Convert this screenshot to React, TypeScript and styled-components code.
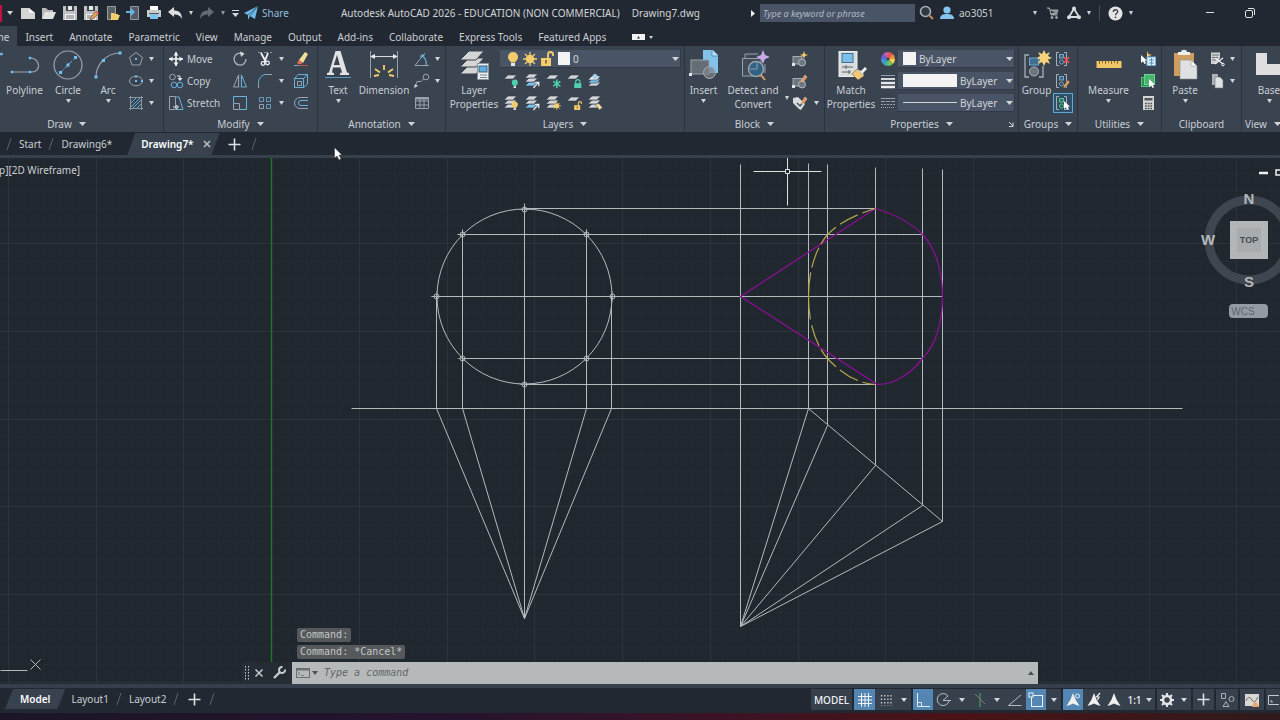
import React from "react";
import styled, { createGlobalStyle, css } from "styled-components";

const c = {
  bar: "#222831",
  panel: "#3a4350",
  panelEdge: "#2b323c",
  field: "#4a5467",
  canvas: "#20272e",
  text: "#c9ced4",
  bright: "#eef0f2",
  grey: "#d2d5d8",
  line: "#9aa3ad",
  blue: "#74bce6",
  yellow: "#f3cd6c",
  teal: "#4fd0ae",
  active: "#5486b4",
  wire: "#b4bbbd",
};

const Global = createGlobalStyle`
  *, *::before, *::after { box-sizing: border-box; }
  body { margin: 0; background: ${c.bar}; color: ${c.text}; font-family: "Noto Sans", "Open Sans", sans-serif; font-size: 10px; line-height: 14px; overflow: hidden; }
  button, input, select { font: inherit; color: inherit; background: none; border: 0; padding: 0; margin: 0; }
  button { display: inline-flex; align-items: center; justify-content: center; white-space: nowrap; flex: none; }
  svg { display: block; flex: none; }
`;

const Shell = styled.div`
  display: flex;
  flex-direction: column;
  height: 100vh;
  overflow: hidden;
`;

/* ---------- title bar ---------- */

const TitleBar = styled.header`
  display: flex;
  align-items: center;
  height: 26px;
  flex: none;
`;
const AppMark = styled.span`
  width: 2px;
  height: 17px;
  background: #c2123f;
`;
const ToolButton = styled.button<{ $w?: number }>`
  width: ${(p) => p.$w ?? 21}px;
  height: 22px;
`;
const ShareButton = styled.button`
  gap: 4px;
  padding-left: 2px;
  color: #8fbfdd;
  height: 22px;
`;
const DocTitle = styled.h1`
  flex: 1;
  display: flex;
  justify-content: center;
  gap: 12px;
  margin: 0;
  padding-left: 6px;
  font-size: 10px;
  font-weight: 400;
  white-space: nowrap;
  overflow: hidden;
  color: ${c.grey};
`;
const TitleRight = styled.div`
  display: flex;
  align-items: center;
  padding-right: 10px;
`;
const SearchBox = styled.input`
  width: 155px;
  height: 18px;
  padding: 0 3px;
  background: ${c.field};
  font-size: 9px;
  font-style: italic;
  &::placeholder { color: #b3b9c3; opacity: 1; }
`;
const UserButton = styled.button`
  gap: 4px;
  width: 98px;
  justify-content: flex-start;
  & > svg:last-child { margin-left: auto; }
`;
const Divider = styled.span`
  width: 1px;
  height: 16px;
  margin: 0 4px 0 5px;
  background: #454c56;
`;
const AccountTools = styled.div`
  display: flex;
  align-items: center;
  padding-left: 5px;
`;
const WindowButtons = styled.div`
  display: flex;
  margin-left: 54px;
`;

/* ---------- ribbon ---------- */

const TabStrip = styled.nav`
  display: flex;
  height: 20px;
  margin-left: -27px;
  flex: none;
`;
const RibbonTab = styled.button<{ $on?: boolean }>`
  padding: 2px 8px 0;
  height: 20px;
  background: ${(p) => (p.$on ? c.panel : "transparent")};
`;
const Ribbon = styled.section`
  display: flex;
  height: 86px;
  margin-left: -30px;
  flex: none;
  background: ${c.panel};
`;
const Panel = styled.div<{ $w: number; $last?: boolean }>`
  width: ${(p) => p.$w}px;
  flex: ${(p) => (p.$last ? "1 0 auto" : "none")};
  display: flex;
  flex-direction: column;
  border-right: 1px solid ${c.panelEdge};
`;
const PanelBody = styled.div<{ $pad?: number }>`
  display: flex;
  height: 69px;
  padding: 2px 0 0 ${(p) => p.$pad ?? 4}px;
`;
const PanelTitle = styled.div<{ $start?: boolean }>`
  position: relative;
  display: flex;
  align-items: center;
  justify-content: ${(p) => (p.$start ? "flex-start" : "center")};
  padding-left: ${(p) => (p.$start ? 3 : 0)}px;
  gap: 7px;
  height: 17px;
  padding-top: 1px;
`;
const Launcher = styled.button`
  position: absolute;
  right: 4px;
  top: 6px;
`;
const BigButton = styled.button<{ $w: number }>`
  width: ${(p) => p.$w}px;
  height: 67px;
  padding-top: 1px;
  flex-direction: column;
  justify-content: flex-start;
  & > span { line-height: 14px; white-space: pre; text-align: center; }
  & > svg:first-child { margin-bottom: 2px; }
  & > svg:last-child { margin-top: 2px; }
`;
const Column = styled.div<{ $w?: number; $end?: number }>`
  display: flex;
  flex-direction: column;
  flex: ${(p) => (p.$w ? "none" : "1")};
  width: ${(p) => (p.$w ? p.$w + "px" : "auto")};
  padding-right: ${(p) => p.$end ?? 0}px;
`;
const Row = styled.div`
  display: flex;
  align-items: center;
  height: 22px;
  flex: none;
`;
const Small = styled.button<{ $w?: number; $on?: boolean }>`
  width: ${(p) => p.$w ?? 21}px;
  height: 20px;
  ${(p) => p.$on && css`border: 1px solid #5aa9d8; background: #2f4f68;`}
`;
const SideCaret = styled.button`
  width: 5px;
  height: 67px;
  padding-top: 32px;
`;
const Labelled = styled.button`
  gap: 3px;
  height: 20px;
  justify-content: flex-start;
`;
const Field = styled.label<{ $gap?: number }>`
  flex: 1;
  display: flex;
  align-items: center;
  gap: ${(p) => p.$gap ?? 3}px;
  height: 18px;
  min-width: 0;
  padding: 0 1px 0 5px;
  background: ${c.field};
  border-right: 1px solid #313946;
  border-bottom: 1px solid #313946;
`;
const Pick = styled.select`
  appearance: none;
  flex: 1;
  min-width: 0;
  color: ${c.grey};
`;
const Swatch = styled.i<{ $w: number; $gap?: number }>`
  width: ${(p) => p.$w}px;
  height: 13px;
  margin: 0 ${(p) => p.$gap ?? 0}px;
  background: #f3f3f3;
  flex: none;
`;
const LineSample = styled.i`
  width: 54px;
  height: 1px;
  background: ${c.grey};
  flex: none;
`;

/* ---------- drawing tabs ---------- */

const FileTabs = styled.nav`
  display: flex;
  align-items: center;
  height: 26px;
  flex: none;
  padding: 1px 0 0 5px;
  border-bottom: 3px solid #36414b;
`;
const SlantTab = styled.button<{ $on?: boolean; $h: number; $pad: number; $end?: number; $lead?: number }>`
  height: ${(p) => p.$h}px;
  padding: 0 ${(p) => p.$end ?? p.$pad}px 0 ${(p) => p.$pad}px;
  margin-left: ${(p) => p.$lead ?? 0}px;
  gap: 9px;
  ${(p) =>
    p.$on &&
    css`
      background: #38424f;
      color: #ffffff;
      font-weight: 600;
      clip-path: polygon(8px 0, 100% 0, calc(100% - 8px) 100%, 0 100%);
    `}
`;

/* ---------- canvas ---------- */

const Canvas = styled.main`
  position: relative;
  flex: 1;
  min-height: 0;
  display: flex;
  flex-direction: column;
  justify-content: space-between;
  overflow: hidden;
  background: ${c.canvas};
`;
const Drawing = styled.svg`
  position: absolute;
  inset: 0;
  width: 100%;
  height: 100%;
`;
const ViewLabel = styled.div`
  position: relative;
  display: flex;
  height: 24px;
  align-items: center;
  margin-left: -25px;
`;
const ViewCube = styled.svg`
  position: absolute;
  top: 4px;
  right: -20px;
`;
const Pointer = styled.svg`
  position: absolute;
  left: 334px;
  top: 147px;
  z-index: 2;
`;
const CommandArea = styled.div`
  position: relative;
  width: 796px;
  max-width: 100%;
  margin: 0 auto;
`;
const History = styled.div`
  display: flex;
  flex-direction: column;
  align-items: flex-start;
  gap: 3px;
  padding: 0 0 3px 55px;
  font-family: "DejaVu Sans Mono", "Liberation Mono", monospace;
`;
const HistoryLine = styled.span`
  padding: 0 3px;
  background: #55595c;
  border-radius: 2px;
  color: #c4c6c7;
`;
const CommandBar = styled.div`
  display: flex;
  height: 22px;
  background: #252c34;
`;
const CommandField = styled.label`
  flex: 1;
  display: flex;
  align-items: center;
  gap: 2px;
  padding: 0 4px;
  background: #b6b9ba;
  color: #4c5052;
`;
const CommandInput = styled.input`
  flex: 1;
  padding-left: 4px;
  font-family: "DejaVu Sans Mono", "Liberation Mono", monospace;
  font-style: italic;
  &::placeholder { color: #626668; opacity: 1; }
`;

/* ---------- status bar ---------- */

const StatusBar = styled.footer`
  display: flex;
  justify-content: space-between;
  height: 29px;
  flex: none;
  border-top: 4px solid #36404c;
`;
const LayoutTabs = styled.nav`
  display: flex;
  align-items: center;
  height: 22px;
  padding-left: 5px;
`;
const StatusTools = styled.div`
  display: flex;
  gap: 2px;
  padding-top: 1px;
`;
const StatusGroup = styled.div`
  display: flex;
  height: 21px;
  background: #37414d;
  color: ${c.bright};
`;
const StatusButton = styled.button<{ $w: number; $on?: boolean }>`
  width: ${(p) => p.$w}px;
  height: 21px;
  gap: 4px;
  background: ${(p) => (p.$on ? c.active : "transparent")};
  font-weight: 500;
`;
const Desktop = styled.div`
  height: 7px;
  flex: none;
  background: linear-gradient(90deg, #1c1528 0%, #25132e 35%, #3b1326 55%, #4a1316 75%, #301a1c 100%);
`;

/* ---------- icons ---------- */

type IconProps = { w?: number; h?: number; box?: string; children: React.ReactNode };
const Icon = ({ w = 16, h = 16, box, children }: IconProps) => (
  <svg width={w} height={h} viewBox={box ?? `0 0 ${w} ${h}`} fill="none" stroke={c.line} strokeWidth="1" aria-hidden="true">
    {children}
  </svg>
);
const Caret = ({ size = 5, color = c.grey }: { size?: number; color?: string }) => (
  <svg width={size} height="4" viewBox="0 0 6 4" preserveAspectRatio="none" aria-hidden="true">
    <path d="M0 0H6L3 4Z" fill={color} />
  </svg>
);
const Plus = () => (
  <Icon w={13} h={13}><path d="M6.5 0.500V12.500M0.500 6.500H12.500" stroke="#dfe2e5" strokeWidth="1.600" /></Icon>
);
const Slash = () => (
  <Icon w={8} h={14}><path d="M6 1L2 13" stroke="#59616b" /></Icon>
);

const sheet = (y: number, fill: string = c.grey) => <path d={`M5 ${y}H13.500L10 ${y + 4}H1Z`} fill={fill} stroke="#303844" strokeWidth="0.600" />;

const PageIcon = () => <Icon><path d="M1 3H9L15 8V14H1Z" fill="#d4d4d2" stroke="none" /><path d="M9 3V8H15Z" fill="#f3f3f3" stroke="none" /></Icon>;
const OpenIcon = () => <Icon><path d="M1 14V3H5L7 5H12V7" fill="#b9b9b7" stroke="none" /><path d="M1 14L4 7H15L12 14Z" fill="#e2e2e0" stroke="none" /></Icon>;
const Floppy = () => (<g stroke="none"><path d="M1 1H15V15H1Z" fill="#bfc1c2" /><path d="M4 1H12V6H4Z" fill="#3c444e" /><path d="M6 1H10V5H6Z" fill="#e9e9e9" /><path d="M3 9H13V15H3Z" fill="#efefef" /><path d="M4 11H12M4 13H12" stroke="#777" /></g>);
const SaveIcon = () => <Icon><Floppy /></Icon>;
const SaveAsIcon = () => <Icon><Floppy /><path d="M7 15L8 12L13 6L16 8L10 14Z" fill="#e9a155" stroke="#2a3039" strokeWidth="0.500" /><path d="M13 6L16 8L15 9L12 7Z" fill="#e25a4a" stroke="none" /></Icon>;
const MobileOpenIcon = () => <Icon><path d="M3.500 1.500H11.500V14.500H3.500Z" fill="#59616b" stroke="#9c9c94" /><path d="M7 15V8H10L11 9H14V10H16L14 15Z" fill="#f0cf6a" stroke="none" /></Icon>;
const MobileSaveIcon = () => <Icon><path d="M5.500 1.500H13.500V14.500H5.500Z" fill="#515b66" stroke="#8e979f" /><path d="M1 6H6V3L10 7L6 11V8H1Z" fill="#63b5e4" stroke="none" /></Icon>;
const PrintIcon = () => <Icon><path d="M4 1H12V5H4Z" fill="#fff" stroke="none" /><path d="M1 5H15V12H1Z" fill="#c9cccd" stroke="none" /><path d="M4 9H12V14H4Z" fill="#7cc4ec" stroke="none" /><path d="M3 8.500H13" stroke="#555" /></Icon>;
const UndoIcon = ({ flip }: { flip?: boolean }) => (
  <Icon><g transform={flip ? "translate(16 0) scale(-1 1)" : undefined}><path d="M1 7L7 2V5.500C12 5.500 15 8 15 14C13 10.500 11 9.500 7 9.500V12Z" fill={flip ? "#636a72" : "#dcdedf"} stroke="none" /></g></Icon>
);
const PlaneIcon = () => <Icon w={14} h={14}><path d="M0 7L14 0L11 13L6 10L4 14L4 9Z" fill="#6fb9e6" stroke="none" /><path d="M4 9L14 0L6 10" stroke="#245272" strokeWidth="0.700" /></Icon>;
const SearchIcon = () => <Icon><circle cx="6.500" cy="6.500" r="5" stroke="#a9b0b7" strokeWidth="1.600" fill="#303842" /><path d="M10.500 10.500L14 14" stroke="#c58c5b" strokeWidth="2" /></Icon>;
const UserIcon = () => <Icon><circle cx="8" cy="5" r="3.600" fill="#84c4ec" stroke="none" /><path d="M1 14C1 10 4 9 8 9S15 10 15 14Z" fill="#84c4ec" stroke="none" /></Icon>;
const CartIcon = () => <Icon w={12} h={12}><path d="M0 1H2.500L4 8H10.500M3 3H11L10 6.500H4" stroke="#9fa4a9" fill="#868c92" /><circle cx="5" cy="10.500" r="1" fill="#a9aeb3" /><circle cx="9.500" cy="10.500" r="1" fill="#a9aeb3" /></Icon>;
const AppStoreIcon = () => <Icon w={14} h={14}><path d="M7 2.500L2 11H12Z" stroke="#dadcde" strokeWidth="1.800" /><circle cx="7" cy="2.500" r="2" fill="#dadcde" stroke="none" /><circle cx="2" cy="11.300" r="2" fill="#dadcde" stroke="none" /><circle cx="12" cy="11.300" r="2" fill="#dadcde" stroke="none" /></Icon>;
const HelpIcon = () => <Icon w={15} h={15}><circle cx="7.500" cy="7.500" r="7" fill="#e4e4e4" stroke="none" /><path d="M5.300 6C5.300 3 9.800 3 9.700 5.700C9.700 7.300 7.500 7.300 7.500 9.300" stroke="#3a414a" strokeWidth="1.400" /><circle cx="7.500" cy="11.300" r="0.900" fill="#3a414a" stroke="none" /></Icon>;

const Dot = ({ x, y, s = 2.4 }: { x: number; y: number; s?: number }) => <rect x={x - s / 2} y={y - s / 2} width={s} height={s} fill="#6fc3f2" stroke="none" />;
const LineIcon = () => <Icon w={30} h={32}><path d="M2 30L27 3" /><Dot x={27.500} y={3} /></Icon>;
const PolylineIcon = () => <Icon w={30} h={32}><path d="M2 23H22C31 23 31 9 20 9" strokeWidth="1.200" /><Dot x={2} y={23} /><Dot x={20} y={23} /><Dot x={20} y={9} /></Icon>;
const CircleIcon = () => <Icon w={30} h={32}><circle cx="15" cy="16" r="14" strokeWidth="1.200" /><path d="M7.500 23.500L22.500 8.500" stroke="#6fb9e6" strokeDasharray="4 2" /><Dot x={7.500} y={23.500} s={3} /><Dot x={15} y={16} s={3} /><Dot x={22.500} y={8.500} s={3} /></Icon>;
const ArcIcon = () => <Icon w={30} h={32}><path d="M3 28C3 16 13 4 27 4" strokeWidth="1.200" /><Dot x={3} y={28} s={3} /><Dot x={10.500} y={11.500} s={3} /><Dot x={27} y={4} s={3} /></Icon>;
const PolygonIcon = () => <Icon><path d="M8 1.500L14.500 6.500L12 14H4L1.500 6.500Z" /><Dot x={8} y={8} s={2} /></Icon>;
const EllipseIcon = () => <Icon><ellipse cx="8" cy="8" rx="6.500" ry="4.800" /><Dot x={8} y={8} s={2} /><Dot x={14} y={8} s={2} /><Dot x={8} y={3.500} s={2} /></Icon>;
const HatchIcon = () => <Icon><path d="M2.500 1V15M13.500 1V15M1 2.500H15M1 13.500H15" stroke="#8d97a1" /><path d="M3 8L8 3M3 12L12 3M5 13L13 5M9 13L13 9" stroke="#63a9d6" /></Icon>;

const MoveIcon = () => <Icon><path d="M8 1V15M1 8H15" stroke="#f0f2f3" strokeWidth="1.600" /><path d="M8 1L10.500 4.500H5.500ZM8 15L5.500 11.500H10.500ZM1 8L4.500 5.500V10.500ZM15 8L11.500 10.500V5.500Z" fill="#f0f2f3" stroke="none" /></Icon>;
const CopyIcon = () => <Icon><circle cx="4.500" cy="4" r="2.800" /><circle cx="6" cy="12" r="2.800" stroke="#68b2dc" /><circle cx="12" cy="12" r="2.800" stroke="#68b2dc" /><path d="M9 3H12V7" stroke="#e6e8ea" /><path d="M9.500 5H14.500L12 8Z" fill="#e6e8ea" stroke="none" /></Icon>;
const StretchIcon = () => <Icon><path d="M1.500 1.500H7.500V14.500H1.500Z" /><path d="M8 2H11L15 14.500H8" stroke="#68b2dc" /><path d="M5 12H10M8 10L10.500 12L8 14" stroke="#e6e8ea" /></Icon>;
const RotateIcon = () => <Icon><path d="M11.500 3.200A6 6 0 1 0 14 8" strokeWidth="1.300" stroke="#aab2ba" /><path d="M8 0.500L12.500 2.500L9 6Z" fill="#d8dbde" stroke="none" /></Icon>;
const MirrorIcon = () => <Icon><path d="M6.500 2V14H1.500Z" /><path d="M9.500 2V14H14.500Z" stroke="#68b2dc" /><path d="M8 1V15" stroke="#59626d" strokeDasharray="2 1" /></Icon>;
const ScaleIcon = () => <Icon><path d="M1.500 8V1.500H14.500V14.500H8" stroke="#68b2dc" /><path d="M1.500 8.500H7.500V14.500H1.500Z" /></Icon>;
const TrimIcon = () => <Icon><path d="M1 1.500H15" stroke="#8b949d" strokeDasharray="4 2" /><path d="M4 2L9 11M11 2L7.500 11" stroke="#eef0f2" strokeWidth="1.800" /><circle cx="6" cy="12.500" r="1.800" stroke="#eef0f2" strokeWidth="1.300" /><circle cx="10.500" cy="12" r="1.800" stroke="#eef0f2" strokeWidth="1.300" /></Icon>;
const FilletIcon = () => <Icon><path d="M1.500 15V10M9 1.500H15" /><path d="M1.500 10C1.500 5 5 1.500 9 1.500" stroke="#68b2dc" /></Icon>;
const ArrayIcon = () => <Icon><path d="M2.500 9.500H6.500V13.500H2.500Z" /><path d="M9.500 9.500H13.500V13.500H9.500ZM2.500 2.500H6.500V6.500H2.500ZM9.500 2.500H13.500V6.500H9.500Z" stroke="#6a9cbb" /></Icon>;
const EraseIcon = () => <Icon><path d="M6 9L12 1L15 3L10 12Z" fill="#f5dd98" stroke="none" /><path d="M6 9L10 12L6 13.500L4 12Z" fill="#e46d5e" stroke="none" /><path d="M1 14.500H5" stroke="#68b2dc" /><path d="M5 14.500H15" stroke="#e2584c" strokeWidth="0.800" /></Icon>;
const ExplodeIcon = () => <Icon><path d="M1.500 5.500H10.500V14.500H1.500ZM1.500 5.500L5 1.500H14.500L10.500 5.500M14.500 1.500V11L10.500 14.500" stroke="#68b2dc" /><path d="M4.500 8.500H8.500V12.500H4.500Z" /></Icon>;
const OffsetIcon = () => <Icon><path d="M15 2.500H7A5.500 5.500 0 0 0 7 13.500H15" /><path d="M15 5.500H8A2.500 2.500 0 0 0 8 10.500H15" stroke="#68b2dc" /></Icon>;

const TextIcon = () => <Icon w={30} h={32}><path d="M4 26V24L6 23.500L12.500 2H17.500L24 23.500L26 24V26H17V24L19 23.500L17.500 18.500H10L9 23.500L11 24V26ZM10.800 16H16.800L14 6Z" fill="#e0e2e4" stroke="none" fillRule="evenodd" /><path d="M2 28.500H28" stroke="#5599c4" /></Icon>;
const DimensionIcon = () => <Icon w={30} h={32}><path d="M1.500 2V29M28.500 2V29" /><path d="M3 7.500H27" stroke="#d8dbde" /><path d="M1 7.500L6 5V10ZM29 7.500L24 5V10Z" fill="#e5e7e9" stroke="none" /><path d="M5 27L10 26M6 20L11 23.500M15 16V21M24 20L19 23.500M25 27L20 26" stroke={c.yellow} strokeWidth="1.800" /></Icon>;
const AngleDimIcon = () => <Icon><path d="M1 14.500H15M1 14.500L11 2" /><path d="M8 5C12 7 12.500 11 12 14M6.500 6L8 4L10.500 5" stroke="#68b2dc" strokeWidth="1.300" /></Icon>;
const LeaderIcon = () => <Icon><path d="M1 14L3 8.500H7L9.500 6" /><circle cx="12" cy="4" r="2.800" /><path d="M0 15L1 11L4 13Z" fill={c.grey} stroke="none" /></Icon>;
const TableIcon = () => <Icon><path d="M1.500 2.500H14.500V13.500H1.500ZM1.500 6H14.500M1.500 10H14.500M6 4V13.500M10 4V13.500" /><path d="M1.500 3.500H14.500" strokeWidth="2" /></Icon>;

const LayerPropIcon = () => (
  <Icon w={32} h={32}>
    {[16, 9, 2].map((y) => <path key={y} d={`M11 ${y}H26L18 ${y + 9}H2Z`} fill="#d4d6d6" stroke="#3a4350" />)}
    <rect x="19.500" y="14.500" width="11" height="16" fill="#eceeef" stroke="#8c949b" /><rect x="21" y="17" width="8" height="6" fill="#5fade0" stroke="#3d617c" /><path d="M22 26H29M22 28.500H29" stroke="#7a828a" />
  </Icon>
);
const Bulb = ({ color = c.yellow }: { color?: string }) => <g stroke="none"><circle cx="8" cy="6" r="5" fill={color} /><path d="M5.500 10H10.500V11.500H5.500Z" fill={color} /><path d="M6 12H10V15H6Z" fill="#e6e6e6" /></g>;
const BulbIcon = () => <Icon><Bulb /></Icon>;
const Sun = () => <g><circle cx="8" cy="8" r="4.200" fill={c.yellow} stroke="none" /><path d="M8 1V15M1 8H15M3 3L13 13M13 3L3 13" stroke={c.yellow} strokeWidth="1.300" /></g>;
const SunIcon = () => <Icon><Sun /></Icon>;
const Lock = ({ color = c.yellow }: { color?: string }) => <g><rect x="2" y="7" width="10" height="8" fill={color} stroke="none" /><path d="M9 7V3.500A2.500 2.500 0 0 1 14 3.500V5" stroke={color} strokeWidth="1.800" /><path d="M7 9V12.500" stroke="#6a5a2c" strokeWidth="1.500" /></g>;
const LockIcon = () => <Icon><Lock /></Icon>;
const ClosedLock = () => <g><rect x="2" y="7" width="12" height="8" fill={c.teal} stroke="none" /><path d="M4.500 7V4.500A3 3 0 0 1 11.500 4.500V7" stroke={c.teal} strokeWidth="2" /></g>;
const Badge = ({ children }: { children: React.ReactNode }) => <g transform="translate(7 6) scale(0.600)">{children}</g>;
const OneSheet = ({ children }: { children?: React.ReactNode }) => <Icon>{sheet(2)}<Badge>{children}</Badge></Icon>;
const Stack = ({ top = c.grey, mid = c.grey, low = c.grey, children }: { top?: string; mid?: string; low?: string; children?: React.ReactNode }) => (
  <Icon>{sheet(9, low)}{sheet(5, mid)}{sheet(1, top)}<Badge>{children}</Badge></Icon>
);
const Arrow = () => <path d="M4 15L12 6M7 5.500H13V12" stroke="#f0f2f4" strokeWidth="2" />;
const Snow = () => <path d="M8 1V15M2 4L14 12M14 4L2 12" stroke={c.teal} strokeWidth="2.600" />;
const CurrentIcon = () => <Icon>{sheet(9)}{sheet(6, "#7cc0ea")}{sheet(3, "#e4eff6")}<circle cx="8" cy="3.500" r="2.500" fill="#a9cfe6" stroke="none" /></Icon>;

const InsertIcon = () => <Icon w={30} h={32}><path d="M14 1H24L29 6V24H14Z" fill="#82c3ec" stroke="none" /><path d="M23 1V7H29" fill="#bfe2f6" stroke="#4f94bf" /><rect x="2" y="11" width="18" height="14" fill="#646c75" stroke="#9aa1a9" /><circle cx="20.500" cy="23.500" r="6" fill="#7b828a" fillOpacity="0.700" stroke="#a9afb5" /><path d="M0 24H3V27H0Z" fill="#dceaf2" stroke="none" /></Icon>;
const DetectIcon = () => <Icon w={32} h={32}><path d="M8 9V5H21M28 15V24M5.500 9.500H24V27H5.500Z" fill="#424b58" /><circle cx="19" cy="20" r="7.500" fill="#2f6285" stroke="#97a3ad" strokeWidth="1.500" /><path d="M13 20H20V13" stroke="#8fa0ad" /><path d="M24 26L28 31" stroke="#dba05e" strokeWidth="2" /><path d="M26 1L28 6L33 8L28 10L26 15L24 10L19 8L24 6Z" fill="#c9a8ec" stroke="none" /></Icon>;
const Blk = ({ children }: { children?: React.ReactNode }) => <Icon><rect x="1" y="5.500" width="9" height="7.500" fill="#6d757e" stroke="#a4abb2" /><circle cx="10" cy="11.500" r="3.500" fill="#6d757e" stroke="#b4babf" /><path d="M0 12H3V15H0Z" fill="#e2e4e6" stroke="none" />{children}</Icon>;
const Pen = () => <path d="M9 8L13 2L15 4L11 9Z" fill="#e98d5c" stroke="#f0d292" strokeWidth="0.600" />;
const TagIcon = () => <Icon><path d="M1 3L6 2L13 9L9 15L7 14L1 8Z" fill="#d9dbdc" stroke="none" /><path d="M5 8L8 11L13 5" stroke="#4a525d" strokeWidth="1.500" /><Pen /></Icon>;

const MatchIcon = () => <Icon w={32} h={32}><rect x="4" y="2.500" width="18" height="25" fill="#dbdddd" stroke="#eee" /><rect x="7" y="4.500" width="11" height="9" fill="#7cc0ea" stroke="#3f7396" /><path d="M7 18H18M7 23H16M11 16V20M14 21V25" stroke="#5c646c" /><path d="M17 25L22 20L29 27L23 31Z" fill="#f0c878" stroke="#6f5b35" strokeWidth="0.600" /><path d="M22 20L26 22L30 18L32 20L28 24L29 27Z" fill="#f0f0f0" stroke="none" /></Icon>;
const WheelIcon = () => {
  const hues = ["#e8554d", "#f08f3d", "#f3d14e", "#6fc05a", "#43b59a", "#4a90d9", "#6c62cf", "#c95bb5"];
  return (
    <Icon>
      {hues.map((h, i) => {
        const a = (i * Math.PI) / 4 - Math.PI / 2;
        const b = a + Math.PI / 4;
        return <path key={h} d={`M8 8L${8 + 7 * Math.cos(a)} ${8 + 7 * Math.sin(a)}A7 7 0 0 1 ${8 + 7 * Math.cos(b)} ${8 + 7 * Math.sin(b)}Z`} fill={h} stroke="none" />;
      })}
      <circle cx="8" cy="8" r="1.600" fill={c.panel} stroke="none" />
    </Icon>
  );
};
const WeightIcon = () => <Icon><path d="M1 2.500H15" /><path d="M1 6H15" strokeWidth="2" stroke="#d5d8da" /><path d="M1 10H15" strokeWidth="2.500" stroke="#e5e7e8" /><path d="M1 14H15" strokeWidth="2.500" stroke="#eee" /></Icon>;
const TypeIcon = () => <Icon><path d="M1 3.500H15" /><path d="M1 6.500H15" strokeDasharray="4 1" /><path d="M1 9.500H15" strokeDasharray="2 1" /><path d="M1 12.500H15" strokeDasharray="1 1" /></Icon>;

const Brackets = ({ tone = "#6ea8cf" }: { tone?: string }) => <g><path d="M4 1.500H1.500V14.500H4M9 1.500H11.500V14.500H9" stroke="#a7afb7" /><rect x="4.500" y="3.500" width="4" height="3.500" stroke={tone} fill="#3e6684" /><circle cx="6.500" cy="11" r="2" stroke={tone} /></g>;
const Cursor = ({ x, y }: { x: number; y: number }) => <path transform={`translate(${x} ${y})`} d="M0 0V8L2 6.300L3.500 9L5 8.200L3.700 5.700H6Z" fill="#fff" stroke="none" />;
const GroupIcon = () => <Icon w={32} h={32}><path d="M8 6H4V28H8M18 28H22V17" stroke="#a7afb7" strokeWidth="1.300" /><rect x="8.500" y="9" width="9" height="7" fill="#3f6e91" stroke="#6ea8cf" /><circle cx="13" cy="22.500" r="4.500" fill="#6d757e" stroke="#a7afb7" /><g transform="translate(16 1)"><path d="M7 0L9 4L13 2L11 6L15 8L11 9.500L13 14L9 12L7 16L5 12L1 14L3 9.500L0 8L3 6L1 2L5 4Z" fill="#f6d27c" stroke="none" /></g></Icon>;
const UngroupIcon = () => <Icon><Brackets /><path d="M9 6L14 12M14 6L9 12" stroke="#e0504e" strokeWidth="1.700" /></Icon>;
const GroupEditIcon = () => <Icon><Brackets /><path d="M8 15L9 12L13 7L15 9L11 14Z" fill="#e9a155" stroke="#3a4350" strokeWidth="0.500" /></Icon>;
const GroupSelectIcon = () => <Icon><Brackets tone="#58c774" /><Cursor x={9} y={6} /></Icon>;
const RulerIcon = () => <Icon w={30} h={32}><rect x="2.500" y="12" width="25" height="7" fill="#f0c667" stroke="none" /><path d="M5.500 12V15M8.500 12V14M11.500 12V15M14.500 12V14M17.500 12V15M20.500 12V14M23.500 12V15" stroke="#8c6d2a" /></Icon>;
const QuickSelectIcon = () => <Icon><path d="M7 0L8.500 3L12 4L8.500 5L7 8" fill={c.yellow} stroke="none" /><rect x="7" y="6" width="8.500" height="8.500" fill="#e4f0f8" stroke="#6fb2dc" /><path d="M9 9H14M9 12H14M11.500 7V14" stroke="#5793bb" /><Cursor x={1} y={4} /></Icon>;
const SelectAllIcon = () => <Icon><rect x="1.500" y="4.500" width="9" height="9" fill="#2f8e51" stroke="#54c67c" /><rect x="4.500" y="1.500" width="10" height="10" fill="#49b46d" stroke="#6bd891" /><Cursor x={9} y={6} /></Icon>;
const CalcIcon = () => <Icon><rect x="3" y="1" width="11" height="14" fill="#d6d5d0" stroke="none" /><rect x="4.500" y="3" width="8" height="2.500" fill="#4d545c" stroke="none" /><path d="M5 8.500H12M5 11H12M5 13.500H12" stroke="#4d545c" strokeWidth="1.400" strokeDasharray="1.800 0.900" /></Icon>;
const PasteIcon = () => <Icon w={30} h={32}><rect x="4" y="4" width="20" height="23" fill="#cf9d5d" stroke="none" /><path d="M8 6V3H11C11 0 17 0 17 3H20V6Z" fill="#eeeeee" stroke="none" /><path d="M10 11H21L27 17V30H10Z" fill="#dfe0e1" stroke="#8e9499" strokeWidth="0.600" /><path d="M21 11V17H27Z" fill="#ffffff" stroke="#8e9499" strokeWidth="0.600" /></Icon>;
const CutIcon = () => <Icon><path d="M2 1.500H11V7L7 13H2Z" fill="#cfd1d3" stroke="none" /><path d="M3 4H10M3 6.500H9M3 9H7" stroke="#6a7179" /><path d="M6 7L14 13M14 7L6 13" stroke="#eceeef" strokeWidth="1.300" /><circle cx="14" cy="13.500" r="1.300" stroke="#eceeef" /></Icon>;
const CopyClipIcon = () => <Icon><path d="M3 1H9V12H3Z" fill="#aeb2b5" stroke="none" /><path d="M6 4H11L14 7V15H6Z" fill="#dfe0e1" stroke="#6a7179" strokeWidth="0.600" /></Icon>;
const BaseIcon = () => <Icon w={32} h={32}><path d="M3 4H14V15H32V26H3Z" fill="#dfdfdf" stroke="none" /></Icon>;

const Person = ({ children }: { children?: React.ReactNode }) => <Icon><path d="M8 1L10.500 7.500L14.500 14L10 12.500L8 11.500L6 12.500L1.500 14L5.500 7.500Z" fill="#f0f0ee" stroke="none" />{children}</Icon>;

/* ---------- model-space drawing ---------- */

const GRID = 87.75;
const steps = (from: number, to: number) => Array.from({ length: to - from }, (_, i) => from + i);
const nodes = [[524, 209], [586, 234], [612, 296], [586, 358], [524, 384], [462, 358], [436, 296], [462, 234]];

const ModelSpace = () => (
  <Drawing aria-label="Cone projection drawing">
    <g fill="none" strokeWidth="1" transform="translate(0.500 -157.500)">
      <g stroke="#232b32">
        {steps(-16, 150).map((i) => <path key={"v" + i} d={`M${Math.round(271 + (i * GRID) / 5)} 150V2000`} />)}
        {steps(-6, 90).map((i) => <path key={"h" + i} d={`M0 ${Math.round(243 + (i * GRID) / 5)}H3000`} />)}
      </g>
      <g stroke="#2b343b">
        {steps(-3, 30).map((i) => <path key={"V" + i} d={`M${Math.round(271 + i * GRID)} 150V2000`} />)}
        {steps(0, 18).map((i) => <path key={"H" + i} d={`M0 ${Math.round(243 + i * GRID)}H3000`} />)}
      </g>
      <path d="M271 150V2000" stroke="#1f7426" strokeWidth="1.500" />
      <g stroke={c.wire}>
        <path d="M351 408H1182" />
        <circle cx="524" cy="296" r="87.500" />
        <path d="M524 203V618M462 229V408M586 229V408M436 296V408M611 296V408" />
        <path d="M524 208H875M457 234H922M431 296H942M462 358H922M524 384H875" />
        <path d="M436 408L524 618L462 408M586 408L524 618L611 408" />
        <path d="M740 164V626M808 163V408M827 164V425M875 167V465M922 168V505M942 169V521" />
        <path d="M808 408L942 521L740 626L808 408M827 425L740 626L875 465M922 505L740 626" />
        {nodes.map(([x, y]) => <g key={`${x}-${y}`}><circle cx={x} cy={y} r="2.500" /><path d={`M${x - 5} ${y}H${x + 5}M${x} ${y - 5}V${y + 5}`} strokeOpacity="0.600" /></g>)}
        <path d="M753 171H785M789 171H821M787 150V169M787 173V205M785 169H789V173H785Z" stroke="#dfe2e3" />
        <path d="M0 670H27M30 659L40 669M40 659L30 669" />
      </g>
      <path d="M875 208C895 214 912 224 922 234C937 250 942 275 942 296C942 320 936 344 922 358C911 372 895 384 877 384L740 296L875 208" stroke="#8a0f93" strokeWidth="1.300" />
      <path d="M875 208C858 213 840 221 827 234C814 250 808 272 808 296C808 320 814 343 827 358C840 372 856 383 875 384" stroke="#b5a648" strokeWidth="1.200" strokeDasharray="14 5 20 5 23 4 21 5 47 6 22 4 23 5 21 5 14 5" />
    </g>
  </Drawing>
);

const Cube = () => (
  <ViewCube width="102" height="160" fontFamily="Liberation Sans, sans-serif" fontWeight="700" textAnchor="middle">
    <circle cx="51" cy="78" r="40" fill="none" stroke="#40464f" strokeWidth="9" />
    <g fill="#b4b8bc" fontSize="15">
      <text x="51" y="42">N</text>
      <text x="10" y="83">W</text>
      <text x="51" y="125">S</text>
    </g>
    <rect x="32" y="59" width="38" height="38" fill="#b3b6b9" />
    <rect x="39" y="66" width="24" height="24" fill="#a8acaf" />
    <text x="51" y="81" fontSize="9" fill="#454b52">TOP</text>
    <rect x="31" y="142" width="39" height="14" rx="4" fill="#949aa3" />
    <text x="45" y="153" fontSize="10" fill="#5e656e" fontWeight="400">WCS</text>
    <path d="M61 11H70" stroke="#f0f0f0" strokeWidth="2.500" />
    <path d="M78 8H84V13H78Z" fill="none" stroke="#f0f0f0" strokeWidth="1.500" />
  </ViewCube>
);

const CaretCell = ({ w = 16, size = 5, name = "More options" }: { w?: number; size?: number; name?: string }) => (
  <Small $w={w} aria-label={name}><Caret size={size} /></Small>
);
const Tool = ({ name, icon, w, on }: { name: string; icon: React.ReactNode; w?: number; on?: boolean }) => (
  <Small $w={w} $on={on} aria-label={name}>{icon}</Small>
);

const ribbonTabs = ["Home", "Insert", "Annotate", "Parametric", "View", "Manage", "Output", "Add-ins", "Collaborate", "Express Tools", "Featured Apps"];

export default function App() {
  return (
    <Shell>
      <Global />
      <TitleBar>
        <AppMark />
        <ToolButton $w={15} aria-label="Application menu"><Caret size={6} /></ToolButton>
        <ToolButton aria-label="New"><PageIcon /></ToolButton>
        <ToolButton aria-label="Open"><OpenIcon /></ToolButton>
        <ToolButton aria-label="Save"><SaveIcon /></ToolButton>
        <ToolButton aria-label="Save as"><SaveAsIcon /></ToolButton>
        <ToolButton aria-label="Open from mobile"><MobileOpenIcon /></ToolButton>
        <ToolButton aria-label="Save to mobile"><MobileSaveIcon /></ToolButton>
        <ToolButton aria-label="Plot"><PrintIcon /></ToolButton>
        <ToolButton aria-label="Undo"><UndoIcon /></ToolButton>
        <ToolButton $w={11} aria-label="Undo list"><Caret size={4} /></ToolButton>
        <ToolButton aria-label="Redo"><UndoIcon flip /></ToolButton>
        <ToolButton $w={11} aria-label="Redo list"><Caret size={4} color="#9299a1" /></ToolButton>
        <ToolButton $w={14} aria-label="Customize toolbar">
          <Icon w={7} h={8}><path d="M0 1.500H7" stroke={c.grey} /><path d="M0 4H7L3.500 8Z" fill={c.grey} stroke="none" /></Icon>
        </ToolButton>
        <ShareButton><PlaneIcon />Share</ShareButton>
        <DocTitle><span>Autodesk AutoCAD 2026 - EDUCATION (NON COMMERCIAL)</span><span>Drawing7.dwg</span></DocTitle>
        <TitleRight>
          <ToolButton $w={14} aria-label="Collapse search"><Icon w={4} h={7}><path d="M0 0L4 3.500L0 7Z" fill={c.bright} stroke="none" /></Icon></ToolButton>
          <SearchBox aria-label="Search" placeholder="Type a keyword or phrase" />
          <ToolButton $w={24} aria-label="Run search"><SearchIcon /></ToolButton>
          <UserButton><UserIcon />ao3051<Caret size={4} /></UserButton>
          <AccountTools>
            <ToolButton aria-label="Cart"><CartIcon /></ToolButton>
            <ToolButton aria-label="App store"><AppStoreIcon /></ToolButton>
            <ToolButton $w={10} aria-label="App store menu"><Caret size={4} /></ToolButton>
            <Divider />
            <ToolButton $w={22} aria-label="Help"><HelpIcon /></ToolButton>
            <ToolButton $w={10} aria-label="Help menu"><Caret size={4} /></ToolButton>
          </AccountTools>
          <WindowButtons>
            <ToolButton $w={40} aria-label="Minimize"><Icon w={10} h={10}><path d="M1 4.500H9" stroke="#dfe1e3" /></Icon></ToolButton>
            <ToolButton $w={40} aria-label="Restore"><Icon w={10} h={10}><rect x="0.500" y="2.500" width="7" height="7" rx="1.500" stroke="#dfe1e3" /><path d="M3 0.500H8Q9.500 0.500 9.500 2V7" stroke="#dfe1e3" /></Icon></ToolButton>
          </WindowButtons>
        </TitleRight>
      </TitleBar>

      <TabStrip aria-label="Ribbon tabs">
        {ribbonTabs.map((t) => <RibbonTab key={t} $on={t === "Home"}>{t}</RibbonTab>)}
        <ToolButton $w={58} aria-label="Ribbon display">
          <Icon w={22} h={8}><rect x="0" y="1" width="13" height="6" fill="#f2f2f2" stroke="none" /><path d="M5 5.500L6.500 3L8 5.500Z" fill="#333" stroke="none" /><path d="M17 3H21L19 6Z" fill={c.grey} stroke="none" /></Icon>
        </ToolButton>
      </TabStrip>

      <Ribbon aria-label="Ribbon">
        <Panel $w={194}>
          <PanelBody $pad={4}>
            <BigButton $w={29} aria-label="Line"><LineIcon /></BigButton>
            <BigButton $w={43}><PolylineIcon /><span>Polyline</span></BigButton>
            <BigButton $w={44}><CircleIcon /><span>Circle</span><Caret /></BigButton>
            <BigButton $w={36}><ArcIcon /><span>Arc</span><Caret /></BigButton>
            <Column $w={38}>
              <Row><Tool w={19} name="Polygon" icon={<PolygonIcon />} /><CaretCell w={13} /></Row>
              <Row><Tool w={19} name="Ellipse" icon={<EllipseIcon />} /><CaretCell w={13} /></Row>
              <Row><Tool w={19} name="Hatch" icon={<HatchIcon />} /><CaretCell w={13} /></Row>
            </Column>
          </PanelBody>
          <PanelTitle>Draw<Caret size={7} /></PanelTitle>
        </Panel>

        <Panel $w={154}>
          <PanelBody>
            <Column $w={61}>
              <Row><Labelled><MoveIcon />Move</Labelled></Row>
              <Row><Labelled><CopyIcon />Copy</Labelled></Row>
              <Row><Labelled><StretchIcon />Stretch</Labelled></Row>
            </Column>
            <Column>
              <Row><Tool name="Rotate" icon={<RotateIcon />} /><Tool w={29} name="Trim" icon={<TrimIcon />} /><CaretCell w={5} /><Tool w={33} name="Erase" icon={<EraseIcon />} /></Row>
              <Row><Tool name="Mirror" icon={<MirrorIcon />} /><Tool w={29} name="Fillet" icon={<FilletIcon />} /><CaretCell w={5} /><Tool w={33} name="Explode" icon={<ExplodeIcon />} /></Row>
              <Row><Tool name="Scale" icon={<ScaleIcon />} /><Tool w={29} name="Array" icon={<ArrayIcon />} /><CaretCell w={5} /><Tool w={33} name="Offset" icon={<OffsetIcon />} /></Row>
            </Column>
          </PanelBody>
          <PanelTitle>Modify<Caret size={7} /></PanelTitle>
        </Panel>

        <Panel $w={128}>
          <PanelBody>
            <BigButton $w={32}><TextIcon /><span>Text</span><Caret /></BigButton>
            <BigButton $w={60}><DimensionIcon /><span>Dimension</span></BigButton>
            <Column>
              <Row><Tool w={16} name="Angular" icon={<AngleDimIcon />} /><CaretCell w={14} /></Row>
              <Row><Tool w={16} name="Leader" icon={<LeaderIcon />} /><CaretCell w={14} /></Row>
              <Row><Tool w={16} name="Table" icon={<TableIcon />} /></Row>
            </Column>
          </PanelBody>
          <PanelTitle>Annotation<Caret size={7} /></PanelTitle>
        </Panel>

        <Panel $w={239}>
          <PanelBody $pad={2}>
            <BigButton $w={52}><LayerPropIcon /><span>{"Layer\nProperties"}</span></BigButton>
            <Column $end={3}>
              <Row>
                <Field $gap={1}>
                  <BulbIcon /><SunIcon /><LockIcon /><Swatch $w={12} $gap={2} />
                  <Pick aria-label="Layer"><option>0</option></Pick>
                  <Caret size={7} />
                </Field>
              </Row>
              <Row>
                <Tool name="Layer off" icon={<OneSheet><Bulb color={c.teal} /></OneSheet>} />
                <Tool name="Isolate" icon={<Stack low="#7cc0ea"><Arrow /></Stack>} />
                <Tool name="Freeze" icon={<OneSheet><Snow /></OneSheet>} />
                <Tool name="Lock" icon={<OneSheet><ClosedLock /></OneSheet>} />
                <Tool name="Make current" icon={<CurrentIcon />} />
              </Row>
              <Row>
                <Tool name="All layers on" icon={<Stack><Bulb /></Stack>} />
                <Tool name="Unisolate" icon={<Stack low="#7cc0ea"><Arrow /></Stack>} />
                <Tool name="Thaw all" icon={<Stack><Sun /></Stack>} />
                <Tool name="Unlock" icon={<OneSheet><Lock /></OneSheet>} />
                <Tool name="Match layer" icon={<Stack><path d="M2 6L8 4L14 11L9 15Z" fill="#f0d9a0" stroke="#555" /></Stack>} />
              </Row>
            </Column>
          </PanelBody>
          <PanelTitle>Layers<Caret size={7} /></PanelTitle>
        </Panel>

        <Panel $w={140}>
          <PanelBody $pad={0}>
            <BigButton $w={37}><InsertIcon /><span>Insert</span><Caret /></BigButton>
            <BigButton $w={62}><DetectIcon /><span>{"Detect and\nConvert"}</span></BigButton>
            <SideCaret aria-label="Detect options"><Caret size={4} /></SideCaret>
            <Column>
              <Row><Tool w={22} name="Create block" icon={<Blk><path d="M12 0L13 3L16 4L13 5L12 8L11 5L8 4L11 3Z" fill={c.yellow} stroke="none" /></Blk>} /></Row>
              <Row><Tool w={22} name="Edit block" icon={<Blk><Pen /></Blk>} /></Row>
              <Row><Tool w={22} name="Edit attributes" icon={<TagIcon />} /><CaretCell w={10} /></Row>
            </Column>
          </PanelBody>
          <PanelTitle>Block<Caret size={7} /></PanelTitle>
        </Panel>

        <Panel $w={194}>
          <PanelBody $pad={0}>
            <BigButton $w={52}><MatchIcon /><span>{"Match\nProperties"}</span></BigButton>
            <Column $end={3}>
              <Row><Tool w={21} name="Color" icon={<WheelIcon />} /><Field><Swatch $w={13} /><Pick aria-label="Object color"><option>ByLayer</option></Pick><Caret size={7} /></Field></Row>
              <Row><Tool w={21} name="Lineweight" icon={<WeightIcon />} /><Field><Swatch $w={54} /><Pick aria-label="Lineweight"><option>ByLayer</option></Pick><Caret size={7} /></Field></Row>
              <Row><Tool w={21} name="Linetype" icon={<TypeIcon />} /><Field><LineSample /><Pick aria-label="Linetype"><option>ByLayer</option></Pick><Caret size={7} /></Field></Row>
            </Column>
          </PanelBody>
          <PanelTitle>Properties<Caret size={7} /><Launcher aria-label="Properties palette"><Icon w={6} h={6}><path d="M1 1L5 5M5 1.500V5.500H1" stroke={c.grey} /></Icon></Launcher></PanelTitle>
        </Panel>

        <Panel $w={59}>
          <PanelBody $pad={1}>
            <BigButton $w={33}><GroupIcon /><span>Group</span></BigButton>
            <Column>
              <Row><Tool w={20} name="Ungroup" icon={<UngroupIcon />} /></Row>
              <Row><Tool w={20} name="Group edit" icon={<GroupEditIcon />} /></Row>
              <Row><Tool w={20} on name="Group selection" icon={<GroupSelectIcon />} /></Row>
            </Column>
          </PanelBody>
          <PanelTitle>Groups<Caret size={7} /></PanelTitle>
        </Panel>

        <Panel $w={84}>
          <PanelBody>
            <BigButton $w={53}><RulerIcon /><span>Measure</span><Caret /></BigButton>
            <Column>
              <Row><Tool w={26} name="Quick select" icon={<QuickSelectIcon />} /></Row>
              <Row><Tool w={26} name="Select all" icon={<SelectAllIcon />} /></Row>
              <Row><Tool w={26} name="Calculator" icon={<CalcIcon />} /></Row>
            </Column>
          </PanelBody>
          <PanelTitle>Utilities<Caret size={7} /></PanelTitle>
        </Panel>

        <Panel $w={80}>
          <PanelBody $pad={3}>
            <BigButton $w={40}><PasteIcon /><span>Paste</span><Caret /></BigButton>
            <Column>
              <Row><Tool w={24} name="Cut" icon={<CutIcon />} /><CaretCell w={6} /></Row>
              <Row><Tool w={24} name="Copy clip" icon={<CopyClipIcon />} /><CaretCell w={6} /></Row>
            </Column>
          </PanelBody>
          <PanelTitle>Clipboard</PanelTitle>
        </Panel>

        <Panel $w={56} $last>
          <PanelBody $pad={11}><BigButton $w={32}><BaseIcon /><span>Base</span><Caret /></BigButton></PanelBody>
          <PanelTitle $start>View<Caret size={7} /></PanelTitle>
        </Panel>
      </Ribbon>

      <FileTabs aria-label="Open drawings">
        <Slash />
        <SlantTab $h={22} $pad={6}>Start</SlantTab>
        <Slash />
        <SlantTab $h={22} $pad={6}>Drawing6*</SlantTab>
        <SlantTab $h={22} $pad={14} $end={9} $lead={9} $on>
          Drawing7*
          <Icon w={8} h={8}><path d="M1 1L7 7M7 1L1 7" stroke="#b9bec4" strokeWidth="1.500" /></Icon>
        </SlantTab>
        <ToolButton $w={30} aria-label="New tab"><Plus /></ToolButton>
        <Slash />
      </FileTabs>

      <Canvas>
        <ModelSpace />
        <ViewLabel>[-][Top][2D Wireframe]</ViewLabel>
        <Cube />
        <CommandArea>
          <History>
            <HistoryLine>Command:</HistoryLine>
            <HistoryLine>Command: *Cancel*</HistoryLine>
          </History>
          <CommandBar>
            <Icon w={10} h={22}><path d="M3.500 4V18M6.500 4V18" stroke="#c4c8cc" strokeDasharray="1.500 1.500" /></Icon>
            <ToolButton $w={14} aria-label="Close command line"><Icon w={8} h={8}><path d="M0.500 0.500L7.500 7.500M7.500 0.500L0.500 7.500" stroke="#c9ccd0" strokeWidth="1.500" /></Icon></ToolButton>
            <ToolButton $w={26} aria-label="Customize"><Icon w={14} h={14}><path d="M2 12L8 6" stroke="#c9ccd0" strokeWidth="2.400" /><path d="M13 3.500A3 3 0 1 1 10.500 1" stroke="#c9ccd0" strokeWidth="2" /></Icon></ToolButton>
            <CommandField>
              <Icon w={14} h={12}><rect x="0.500" y="1.500" width="13" height="9" stroke="#6a6e71" /><path d="M0 2.500H14" stroke="#6a6e71" strokeWidth="2" /><path d="M2 5L4 6.500L2 8M5 8.500H8" stroke="#6a6e71" strokeWidth="0.800" /></Icon>
              <Caret size={6} color="#4c5052" />
              <CommandInput aria-label="Command line" placeholder="Type a command" />
              <Icon w={6} h={4}><path d="M0 4H6L3 0Z" fill="#4c5052" stroke="none" /></Icon>
            </CommandField>
          </CommandBar>
        </CommandArea>
      </Canvas>

      <StatusBar>
        <LayoutTabs aria-label="Layouts">
          <SlantTab $h={20} $pad={15} $on>Model</SlantTab>
          <SlantTab $h={20} $pad={6}>Layout1</SlantTab>
          <Slash />
          <SlantTab $h={20} $pad={6}>Layout2</SlantTab>
          <Slash />
          <ToolButton $w={28} aria-label="New layout"><Plus /></ToolButton>
          <Slash />
        </LayoutTabs>
        <StatusTools>
          <StatusGroup><StatusButton $w={41}>MODEL</StatusButton></StatusGroup>
          <StatusGroup>
            <StatusButton $w={21} $on aria-label="Grid"><Icon><path d="M4.500 1V15M8 1V15M11.500 1V15M1 4.500H15M1 8H15M1 11.500H15" stroke="#f0f2f4" /></Icon></StatusButton>
            <StatusButton $w={21} aria-label="Snap"><Icon w={12} h={12}><path d="M1.500 1V12M4.700 1V12M7.900 1V12M11 1V12" stroke="#cfd3d7" strokeDasharray="1.500 2" strokeWidth="1.300" /></Icon></StatusButton>
            <StatusButton $w={15} aria-label="Snap settings"><Caret size={6} /></StatusButton>
          </StatusGroup>
          <StatusGroup>
            <StatusButton $w={20} $on aria-label="Ortho"><Icon><path d="M2.500 1V14.500H15M2.500 10.500H6.500V14.500" stroke="#e2ebf3" /></Icon></StatusButton>
            <StatusButton $w={22} aria-label="Polar"><Icon><path d="M12 4A6 6 0 1 0 13 9" stroke="#b6bcc3" /><path d="M15 8.500H7L12 4" stroke="#b6bcc3" /></Icon></StatusButton>
            <StatusButton $w={14} aria-label="Polar settings"><Caret size={6} /></StatusButton>
            <StatusButton $w={21} aria-label="Isometric"><Icon><path d="M8 1V15" stroke="#4caf5c" /><path d="M3 2L13 12" stroke="#8a7775" /></Icon></StatusButton>
            <StatusButton $w={14} aria-label="Isometric settings"><Caret size={6} /></StatusButton>
            <StatusButton $w={22} aria-label="Tracking"><Icon><path d="M14 3L1.500 13.500H14.500" stroke="#b6bcc3" /></Icon></StatusButton>
            <StatusButton $w={20} $on aria-label="Object snap"><Icon><rect x="3.500" y="3.500" width="11" height="11" stroke="#eaf0f5" /><rect x="1" y="1" width="4" height="4" fill={c.active} stroke="#eaf0f5" /></Icon></StatusButton>
            <StatusButton $w={15} aria-label="Object snap settings"><Caret size={6} /></StatusButton>
          </StatusGroup>
          <StatusGroup>
            <StatusButton $w={20} $on aria-label="Annotation visibility"><Person><circle cx="12.500" cy="4" r="2" stroke="#eaf0f5" /></Person></StatusButton>
            <StatusButton $w={21} aria-label="Auto scale"><Person><path d="M14 1L10.500 5H13L11.500 8" stroke="#eee" strokeWidth="1.200" /></Person></StatusButton>
            <StatusButton $w={20} aria-label="Annotation"><Person /></StatusButton>
            <StatusButton $w={31}>1:1<Caret size={6} /></StatusButton>
          </StatusGroup>
          <StatusGroup>
            <StatusButton $w={20} aria-label="Workspace"><Icon><circle cx="8" cy="8" r="4" stroke="#e2e4e6" strokeWidth="2.600" /><path d="M8 1V4M8 12V15M1 8H4M12 8H15M3 3L5 5M11 11L13 13M13 3L11 5M5 11L3 13" stroke="#e2e4e6" strokeWidth="2" /></Icon></StatusButton>
            <StatusButton $w={14} aria-label="Workspace list"><Caret size={6} /></StatusButton>
          </StatusGroup>
          <StatusGroup><StatusButton $w={21} aria-label="Annotation monitor"><Plus /></StatusButton></StatusGroup>
          <StatusGroup><StatusButton $w={22} aria-label="Isolate objects"><Icon><path d="M2.500 1.500H6.500V6.500H2.500ZM7 9.500L10 14.500H4Z" stroke="#a9b0b7" /><circle cx="12.500" cy="7" r="2.500" stroke="#a9b0b7" /></Icon></StatusButton></StatusGroup>
          <StatusGroup><StatusButton $w={24} aria-label="Hardware acceleration"><Icon><rect x="1" y="2" width="14" height="12" fill="#d9d9d4" stroke="none" /><path d="M2 9C4 4 6 5 8 8S11 10 14 5" stroke="#5d646b" /><path d="M11 8L15 15H8Z" fill="#e9a46f" stroke="none" /></Icon></StatusButton></StatusGroup>
          <StatusGroup><StatusButton $w={14} aria-label="Clean screen"><Icon w={12} h={12}><path d="M1.500 1.500H12M1.500 1.500V10.500H12M4 8V6M4 8H6" stroke="#c4c8cc" /></Icon></StatusButton></StatusGroup>
        </StatusTools>
      </StatusBar>
      <Desktop />
      <Pointer width="9" height="14"><path d="M0.500 0.500V11L3 9L5 13L7 12L5 8H8Z" fill="#fff" stroke="#333" strokeWidth="0.500" /></Pointer>
    </Shell>
  );
}
